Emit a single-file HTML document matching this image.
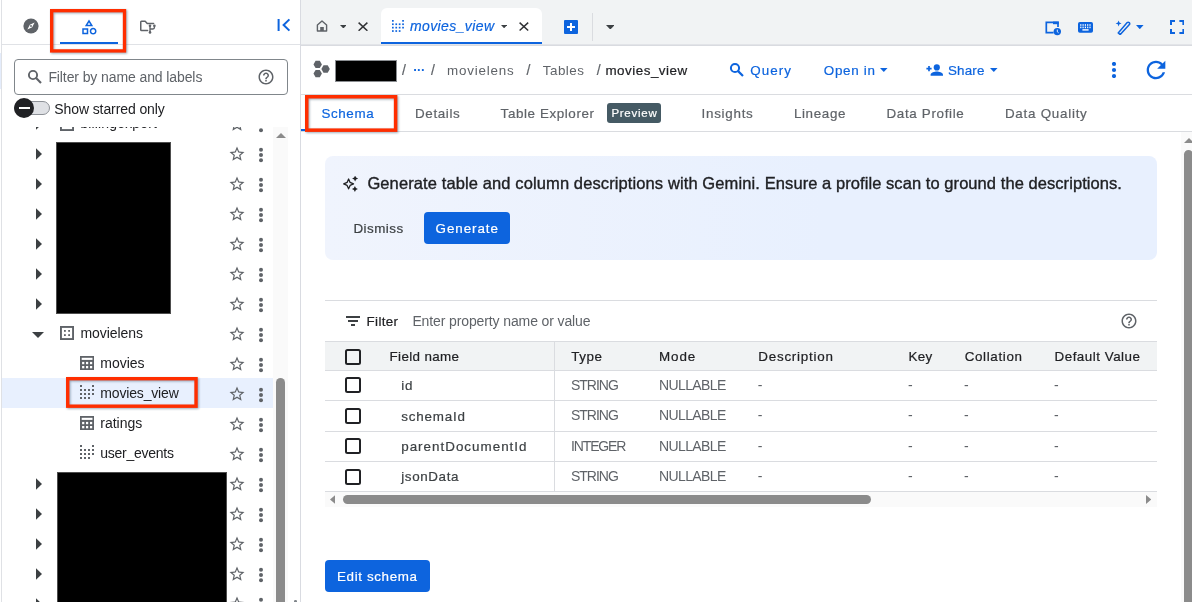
<!DOCTYPE html>
<html lang="en"><head><meta charset="utf-8"><title>BigQuery - movies_view</title>
<style>
html,body{margin:0;padding:0}
body{width:1192px;height:602px;position:relative;overflow:hidden;background:#fff;will-change:transform;font-family:"Liberation Sans",sans-serif;}
body div,body span,body svg{position:absolute;box-sizing:border-box}
span{white-space:pre}
</style></head><body>
<div style="left:0px;top:53px;width:1px;height:36px;background:#e4ecfb;"></div>
<div style="left:1px;top:0px;width:1px;height:602px;background:#dfe1e5;"></div>
<div style="left:2px;top:44px;width:298px;height:1px;background:#e0e2e6;"></div>
<svg style="left:22px;top:17px;" width="18" height="18" viewBox="0 0 18 18"><circle cx="9" cy="9" r="7.6" fill="#5f6368"/><path d="M12.6 5.4 L10.2 10.2 L5.4 12.6 L7.8 7.8 Z" fill="#fff"/><circle cx="9" cy="9" r="0.9" fill="#5f6368"/></svg>
<svg style="left:80px;top:17.6px;" width="18" height="18" viewBox="0 0 24 24"><path fill="#0d64de" d="M12 2l-5.5 9h11L12 2zm0 3.84L13.93 9h-3.87L12 5.84zM17.5 13c-2.49 0-4.5 2.01-4.5 4.5s2.01 4.5 4.5 4.5 4.5-2.01 4.5-4.5-2.01-4.5-4.5-4.5zm0 7c-1.38 0-2.5-1.12-2.5-2.5s1.12-2.5 2.5-2.5 2.5 1.12 2.5 2.5-1.12 2.5-2.5 2.5zM3 21.5h8v-8H3v8zm2-6h4v4H5v-4z"/></svg>
<div style="left:60px;top:42px;width:58px;height:2px;background:#0d64de;"></div>
<svg style="left:138px;top:17px;" width="20" height="18" viewBox="0 0 20 18"><path d="M9.6 13.45 H3.5 Q2.75 13.45 2.75 12.7 V5.1 Q2.75 4.35 3.5 4.35 H7.2 L9.2 6.4 H15.6" fill="none" stroke="#5f6368" stroke-width="1.5" stroke-linecap="round" stroke-linejoin="round"/><path d="M12 8.8 V15.2 M16.4 8.8 V10.6 Q16.4 12 15 12 H12" fill="none" stroke="#5f6368" stroke-width="1.4"/><circle cx="12" cy="8.8" r="1.3" fill="#5f6368"/><circle cx="16.4" cy="8.8" r="1.3" fill="#5f6368"/><circle cx="12" cy="15.4" r="1.3" fill="#5f6368"/></svg>
<svg style="left:276px;top:17px;" width="16" height="16" viewBox="0 0 16 16"><path d="M2.6 2v12" stroke="#0d64de" stroke-width="2" fill="none"/><path d="M13.4 2.4 L7.6 8 L13.4 13.6" stroke="#0d64de" stroke-width="2" fill="none"/></svg>
<svg style="left:45.7px;top:5.25px;filter:drop-shadow(1px 1px 1.2px rgba(40,70,100,.45))" width="84.2" height="51.6" viewBox="0 0 84.2 51.6"><rect x="5.67" y="5.67" width="72.85" height="40.25" fill="none" stroke="#ff2e00" stroke-width="3.35"/></svg>
<svg style="left:36px;top:118px;" width="6" height="12" viewBox="0 0 6 12"><path d="M0 0.3 L6 6 L0 11.7 Z" fill="#3c4043"/></svg>
<svg style="left:60px;top:117.0px;" width="14" height="14" viewBox="0 0 14 14"><rect x="0.95" y="0.95" width="12.1" height="12.1" fill="none" stroke="#5f6368" stroke-width="1.9"/><rect x="4" y="4" width="1.8" height="1.8" fill="#5f6368"/><rect x="4" y="8.2" width="1.8" height="1.8" fill="#5f6368"/><rect x="8.2" y="4" width="1.8" height="1.8" fill="#5f6368"/><rect x="8.2" y="8.2" width="1.8" height="1.8" fill="#5f6368"/></svg>
<span style="left:80.40px;top:113px;line-height:21px;font-size:14px;color:#202124;letter-spacing:0.148px;">billingexport</span>
<svg style="left:228.05px;top:114.6px;" width="18" height="18" viewBox="0 0 24 24"><path fill="#5f6368" d="M22 9.24l-7.19-.62L12 2 9.19 8.63 2 9.24l5.46 4.73L5.82 21 12 17.27 18.18 21l-1.63-7.03L22 9.24zM12 15.4l-3.76 2.27 1-4.28-3.32-2.88 4.38-.38L12 6.1l1.71 4.04 4.38.38-3.32 2.88 1 4.28L12 15.4z"/></svg>
<svg style="left:258px;top:116.8px;" width="6" height="16" viewBox="0 0 6 16"><circle cx="3" cy="2.8499999999999996" r="2.0" fill="#5f6368"/><circle cx="3" cy="8.0" r="2.0" fill="#5f6368"/><circle cx="3" cy="13.15" r="2.0" fill="#5f6368"/></svg>
<div style="left:2px;top:96px;width:271px;height:30.6px;background:#fff;"></div>
<div style="left:14px;top:59px;width:274px;height:36px;border:1px solid #80868b;border-radius:4px;background:#fff"></div>
<svg style="left:27px;top:68.5px;" width="16" height="16" viewBox="0 0 16 16"><circle cx="6" cy="6" r="4.1" fill="none" stroke="#5f6368" stroke-width="1.9"/><path d="M9.1 9.1 L14 14" stroke="#5f6368" stroke-width="2.1" fill="none"/></svg>
<span style="left:48.40px;top:67px;line-height:21px;font-size:14px;color:#5f6368;letter-spacing:-0.101px;">Filter by name and labels</span>
<svg style="left:256.7px;top:68px;" width="18" height="18" viewBox="0 0 24 24"><path fill="#5f6368" d="M11 18h2v-2h-2v2zm1-16C6.48 2 2 6.48 2 12s4.48 10 10 10 10-4.48 10-10S17.52 2 12 2zm0 18c-4.41 0-8-3.59-8-8s3.590-8 8-8 8 3.590 8 8-3.590 8-8 8zm0-14c-2.210 0-4 1.790-4 4h2c0-1.100.9-2 2-2s2 .9 2 2c0 2-3 1.750-3 5h2c0-2.250 3-2.500 3-5 0-2.210-1.790-4-4-4z"/></svg>
<div style="left:14px;top:101px;width:36px;height:14px;border-radius:7px;background:#dfe1e5;border:1px solid #8d9197"></div>
<div style="left:14px;top:98px;width:20px;height:20px;border-radius:10px;background:#202124"></div>
<div style="left:18.5px;top:107px;width:11px;height:2px;background:#fff;"></div>
<span style="left:54.30px;top:99px;line-height:21px;font-size:14px;color:#202124;letter-spacing:-0.098px;">Show starred only</span>
<div style="left:2px;top:378px;width:271px;height:30px;background:#e8f0fe;"></div>
<svg style="left:228.05px;top:144.6px;" width="18" height="18" viewBox="0 0 24 24"><path fill="#5f6368" d="M22 9.24l-7.19-.62L12 2 9.19 8.63 2 9.24l5.46 4.73L5.82 21 12 17.27 18.18 21l-1.63-7.03L22 9.24zM12 15.4l-3.76 2.27 1-4.28-3.32-2.88 4.38-.38L12 6.1l1.71 4.04 4.38.38-3.32 2.88 1 4.28L12 15.4z"/></svg>
<svg style="left:258px;top:146.8px;" width="6" height="16" viewBox="0 0 6 16"><circle cx="3" cy="2.8499999999999996" r="2.0" fill="#5f6368"/><circle cx="3" cy="8.0" r="2.0" fill="#5f6368"/><circle cx="3" cy="13.15" r="2.0" fill="#5f6368"/></svg>
<svg style="left:36px;top:148px;" width="6" height="12" viewBox="0 0 6 12"><path d="M0 0.3 L6 6 L0 11.7 Z" fill="#3c4043"/></svg>
<svg style="left:228.05px;top:174.6px;" width="18" height="18" viewBox="0 0 24 24"><path fill="#5f6368" d="M22 9.24l-7.19-.62L12 2 9.19 8.63 2 9.24l5.46 4.73L5.82 21 12 17.27 18.18 21l-1.63-7.03L22 9.24zM12 15.4l-3.76 2.27 1-4.28-3.32-2.88 4.38-.38L12 6.1l1.71 4.04 4.38.38-3.32 2.88 1 4.28L12 15.4z"/></svg>
<svg style="left:258px;top:176.8px;" width="6" height="16" viewBox="0 0 6 16"><circle cx="3" cy="2.8499999999999996" r="2.0" fill="#5f6368"/><circle cx="3" cy="8.0" r="2.0" fill="#5f6368"/><circle cx="3" cy="13.15" r="2.0" fill="#5f6368"/></svg>
<svg style="left:36px;top:178px;" width="6" height="12" viewBox="0 0 6 12"><path d="M0 0.3 L6 6 L0 11.7 Z" fill="#3c4043"/></svg>
<svg style="left:228.05px;top:204.6px;" width="18" height="18" viewBox="0 0 24 24"><path fill="#5f6368" d="M22 9.24l-7.19-.62L12 2 9.19 8.63 2 9.24l5.46 4.73L5.82 21 12 17.27 18.18 21l-1.63-7.03L22 9.24zM12 15.4l-3.76 2.27 1-4.28-3.32-2.88 4.38-.38L12 6.1l1.71 4.04 4.38.38-3.32 2.88 1 4.28L12 15.4z"/></svg>
<svg style="left:258px;top:206.8px;" width="6" height="16" viewBox="0 0 6 16"><circle cx="3" cy="2.8499999999999996" r="2.0" fill="#5f6368"/><circle cx="3" cy="8.0" r="2.0" fill="#5f6368"/><circle cx="3" cy="13.15" r="2.0" fill="#5f6368"/></svg>
<svg style="left:36px;top:208px;" width="6" height="12" viewBox="0 0 6 12"><path d="M0 0.3 L6 6 L0 11.7 Z" fill="#3c4043"/></svg>
<svg style="left:228.05px;top:234.6px;" width="18" height="18" viewBox="0 0 24 24"><path fill="#5f6368" d="M22 9.24l-7.19-.62L12 2 9.19 8.63 2 9.24l5.46 4.73L5.82 21 12 17.27 18.18 21l-1.63-7.03L22 9.24zM12 15.4l-3.76 2.27 1-4.28-3.32-2.88 4.38-.38L12 6.1l1.71 4.04 4.38.38-3.32 2.88 1 4.28L12 15.4z"/></svg>
<svg style="left:258px;top:236.8px;" width="6" height="16" viewBox="0 0 6 16"><circle cx="3" cy="2.8499999999999996" r="2.0" fill="#5f6368"/><circle cx="3" cy="8.0" r="2.0" fill="#5f6368"/><circle cx="3" cy="13.15" r="2.0" fill="#5f6368"/></svg>
<svg style="left:36px;top:238px;" width="6" height="12" viewBox="0 0 6 12"><path d="M0 0.3 L6 6 L0 11.7 Z" fill="#3c4043"/></svg>
<svg style="left:228.05px;top:264.6px;" width="18" height="18" viewBox="0 0 24 24"><path fill="#5f6368" d="M22 9.24l-7.19-.62L12 2 9.19 8.63 2 9.24l5.46 4.73L5.82 21 12 17.27 18.18 21l-1.63-7.03L22 9.24zM12 15.4l-3.76 2.27 1-4.28-3.32-2.88 4.38-.38L12 6.1l1.71 4.04 4.38.38-3.32 2.88 1 4.28L12 15.4z"/></svg>
<svg style="left:258px;top:266.8px;" width="6" height="16" viewBox="0 0 6 16"><circle cx="3" cy="2.8499999999999996" r="2.0" fill="#5f6368"/><circle cx="3" cy="8.0" r="2.0" fill="#5f6368"/><circle cx="3" cy="13.15" r="2.0" fill="#5f6368"/></svg>
<svg style="left:36px;top:268px;" width="6" height="12" viewBox="0 0 6 12"><path d="M0 0.3 L6 6 L0 11.7 Z" fill="#3c4043"/></svg>
<svg style="left:228.05px;top:294.6px;" width="18" height="18" viewBox="0 0 24 24"><path fill="#5f6368" d="M22 9.24l-7.19-.62L12 2 9.19 8.63 2 9.24l5.46 4.73L5.82 21 12 17.27 18.18 21l-1.63-7.03L22 9.24zM12 15.4l-3.76 2.27 1-4.28-3.32-2.88 4.38-.38L12 6.1l1.71 4.04 4.38.38-3.32 2.88 1 4.28L12 15.4z"/></svg>
<svg style="left:258px;top:296.8px;" width="6" height="16" viewBox="0 0 6 16"><circle cx="3" cy="2.8499999999999996" r="2.0" fill="#5f6368"/><circle cx="3" cy="8.0" r="2.0" fill="#5f6368"/><circle cx="3" cy="13.15" r="2.0" fill="#5f6368"/></svg>
<svg style="left:36px;top:298px;" width="6" height="12" viewBox="0 0 6 12"><path d="M0 0.3 L6 6 L0 11.7 Z" fill="#3c4043"/></svg>
<svg style="left:228.05px;top:324.6px;" width="18" height="18" viewBox="0 0 24 24"><path fill="#5f6368" d="M22 9.24l-7.19-.62L12 2 9.19 8.63 2 9.24l5.46 4.73L5.82 21 12 17.27 18.18 21l-1.63-7.03L22 9.24zM12 15.4l-3.76 2.27 1-4.28-3.32-2.88 4.38-.38L12 6.1l1.71 4.04 4.38.38-3.32 2.88 1 4.28L12 15.4z"/></svg>
<svg style="left:258px;top:326.8px;" width="6" height="16" viewBox="0 0 6 16"><circle cx="3" cy="2.8499999999999996" r="2.0" fill="#5f6368"/><circle cx="3" cy="8.0" r="2.0" fill="#5f6368"/><circle cx="3" cy="13.15" r="2.0" fill="#5f6368"/></svg>
<svg style="left:228.05px;top:354.6px;" width="18" height="18" viewBox="0 0 24 24"><path fill="#5f6368" d="M22 9.24l-7.19-.62L12 2 9.19 8.63 2 9.24l5.46 4.73L5.82 21 12 17.27 18.18 21l-1.63-7.03L22 9.24zM12 15.4l-3.76 2.27 1-4.28-3.32-2.88 4.38-.38L12 6.1l1.71 4.04 4.38.38-3.32 2.88 1 4.28L12 15.4z"/></svg>
<svg style="left:258px;top:356.8px;" width="6" height="16" viewBox="0 0 6 16"><circle cx="3" cy="2.8499999999999996" r="2.0" fill="#5f6368"/><circle cx="3" cy="8.0" r="2.0" fill="#5f6368"/><circle cx="3" cy="13.15" r="2.0" fill="#5f6368"/></svg>
<svg style="left:228.05px;top:384.6px;" width="18" height="18" viewBox="0 0 24 24"><path fill="#5f6368" d="M22 9.24l-7.19-.62L12 2 9.19 8.63 2 9.24l5.46 4.73L5.82 21 12 17.27 18.18 21l-1.63-7.03L22 9.24zM12 15.4l-3.76 2.27 1-4.28-3.32-2.88 4.38-.38L12 6.1l1.71 4.04 4.38.38-3.32 2.88 1 4.28L12 15.4z"/></svg>
<svg style="left:258px;top:386.8px;" width="6" height="16" viewBox="0 0 6 16"><circle cx="3" cy="2.8499999999999996" r="2.0" fill="#5f6368"/><circle cx="3" cy="8.0" r="2.0" fill="#5f6368"/><circle cx="3" cy="13.15" r="2.0" fill="#5f6368"/></svg>
<svg style="left:228.05px;top:414.6px;" width="18" height="18" viewBox="0 0 24 24"><path fill="#5f6368" d="M22 9.24l-7.19-.62L12 2 9.19 8.63 2 9.24l5.46 4.73L5.82 21 12 17.27 18.18 21l-1.63-7.03L22 9.24zM12 15.4l-3.76 2.27 1-4.28-3.32-2.88 4.38-.38L12 6.1l1.71 4.04 4.38.38-3.32 2.88 1 4.28L12 15.4z"/></svg>
<svg style="left:258px;top:416.8px;" width="6" height="16" viewBox="0 0 6 16"><circle cx="3" cy="2.8499999999999996" r="2.0" fill="#5f6368"/><circle cx="3" cy="8.0" r="2.0" fill="#5f6368"/><circle cx="3" cy="13.15" r="2.0" fill="#5f6368"/></svg>
<svg style="left:228.05px;top:444.6px;" width="18" height="18" viewBox="0 0 24 24"><path fill="#5f6368" d="M22 9.24l-7.19-.62L12 2 9.19 8.63 2 9.24l5.46 4.73L5.82 21 12 17.27 18.18 21l-1.63-7.03L22 9.24zM12 15.4l-3.76 2.27 1-4.28-3.32-2.88 4.38-.38L12 6.1l1.71 4.04 4.38.38-3.32 2.88 1 4.28L12 15.4z"/></svg>
<svg style="left:258px;top:446.8px;" width="6" height="16" viewBox="0 0 6 16"><circle cx="3" cy="2.8499999999999996" r="2.0" fill="#5f6368"/><circle cx="3" cy="8.0" r="2.0" fill="#5f6368"/><circle cx="3" cy="13.15" r="2.0" fill="#5f6368"/></svg>
<svg style="left:228.05px;top:474.6px;" width="18" height="18" viewBox="0 0 24 24"><path fill="#5f6368" d="M22 9.24l-7.19-.62L12 2 9.19 8.63 2 9.24l5.46 4.73L5.82 21 12 17.27 18.18 21l-1.63-7.03L22 9.24zM12 15.4l-3.76 2.27 1-4.28-3.32-2.88 4.38-.38L12 6.1l1.71 4.04 4.38.38-3.32 2.88 1 4.28L12 15.4z"/></svg>
<svg style="left:258px;top:476.8px;" width="6" height="16" viewBox="0 0 6 16"><circle cx="3" cy="2.8499999999999996" r="2.0" fill="#5f6368"/><circle cx="3" cy="8.0" r="2.0" fill="#5f6368"/><circle cx="3" cy="13.15" r="2.0" fill="#5f6368"/></svg>
<svg style="left:36px;top:478px;" width="6" height="12" viewBox="0 0 6 12"><path d="M0 0.3 L6 6 L0 11.7 Z" fill="#3c4043"/></svg>
<svg style="left:228.05px;top:504.6px;" width="18" height="18" viewBox="0 0 24 24"><path fill="#5f6368" d="M22 9.24l-7.19-.62L12 2 9.19 8.63 2 9.24l5.46 4.73L5.82 21 12 17.27 18.18 21l-1.63-7.03L22 9.24zM12 15.4l-3.76 2.27 1-4.28-3.32-2.88 4.38-.38L12 6.1l1.71 4.04 4.38.38-3.32 2.88 1 4.28L12 15.4z"/></svg>
<svg style="left:258px;top:506.8px;" width="6" height="16" viewBox="0 0 6 16"><circle cx="3" cy="2.8499999999999996" r="2.0" fill="#5f6368"/><circle cx="3" cy="8.0" r="2.0" fill="#5f6368"/><circle cx="3" cy="13.15" r="2.0" fill="#5f6368"/></svg>
<svg style="left:36px;top:508px;" width="6" height="12" viewBox="0 0 6 12"><path d="M0 0.3 L6 6 L0 11.7 Z" fill="#3c4043"/></svg>
<svg style="left:228.05px;top:534.6px;" width="18" height="18" viewBox="0 0 24 24"><path fill="#5f6368" d="M22 9.24l-7.19-.62L12 2 9.19 8.63 2 9.24l5.46 4.73L5.82 21 12 17.27 18.18 21l-1.63-7.03L22 9.24zM12 15.4l-3.76 2.27 1-4.28-3.32-2.88 4.38-.38L12 6.1l1.71 4.04 4.38.38-3.32 2.88 1 4.28L12 15.4z"/></svg>
<svg style="left:258px;top:536.8px;" width="6" height="16" viewBox="0 0 6 16"><circle cx="3" cy="2.8499999999999996" r="2.0" fill="#5f6368"/><circle cx="3" cy="8.0" r="2.0" fill="#5f6368"/><circle cx="3" cy="13.15" r="2.0" fill="#5f6368"/></svg>
<svg style="left:36px;top:538px;" width="6" height="12" viewBox="0 0 6 12"><path d="M0 0.3 L6 6 L0 11.7 Z" fill="#3c4043"/></svg>
<svg style="left:228.05px;top:564.6px;" width="18" height="18" viewBox="0 0 24 24"><path fill="#5f6368" d="M22 9.24l-7.19-.62L12 2 9.19 8.63 2 9.24l5.46 4.73L5.82 21 12 17.27 18.18 21l-1.63-7.03L22 9.24zM12 15.4l-3.76 2.27 1-4.28-3.32-2.88 4.38-.38L12 6.1l1.71 4.04 4.38.38-3.32 2.88 1 4.28L12 15.4z"/></svg>
<svg style="left:258px;top:566.8px;" width="6" height="16" viewBox="0 0 6 16"><circle cx="3" cy="2.8499999999999996" r="2.0" fill="#5f6368"/><circle cx="3" cy="8.0" r="2.0" fill="#5f6368"/><circle cx="3" cy="13.15" r="2.0" fill="#5f6368"/></svg>
<svg style="left:36px;top:568px;" width="6" height="12" viewBox="0 0 6 12"><path d="M0 0.3 L6 6 L0 11.7 Z" fill="#3c4043"/></svg>
<svg style="left:228.05px;top:594.6px;" width="18" height="18" viewBox="0 0 24 24"><path fill="#5f6368" d="M22 9.24l-7.19-.62L12 2 9.19 8.63 2 9.24l5.46 4.73L5.82 21 12 17.27 18.18 21l-1.63-7.03L22 9.24zM12 15.4l-3.76 2.27 1-4.28-3.32-2.88 4.38-.38L12 6.1l1.71 4.04 4.38.38-3.32 2.88 1 4.28L12 15.4z"/></svg>
<svg style="left:258px;top:596.8px;" width="6" height="16" viewBox="0 0 6 16"><circle cx="3" cy="2.8499999999999996" r="2.0" fill="#5f6368"/><circle cx="3" cy="8.0" r="2.0" fill="#5f6368"/><circle cx="3" cy="13.15" r="2.0" fill="#5f6368"/></svg>
<svg style="left:36px;top:598px;" width="6" height="12" viewBox="0 0 6 12"><path d="M0 0.3 L6 6 L0 11.7 Z" fill="#3c4043"/></svg>
<svg style="left:32.0px;top:332.0px;" width="12" height="6" viewBox="0 0 12 6"><path d="M0 0 H12 L6.0 6 Z" fill="#3c4043"/></svg>
<svg style="left:60px;top:325.8px;" width="14" height="14" viewBox="0 0 14 14"><rect x="0.95" y="0.95" width="12.1" height="12.1" fill="none" stroke="#5f6368" stroke-width="1.9"/><rect x="4" y="4" width="1.8" height="1.8" fill="#5f6368"/><rect x="4" y="8.2" width="1.8" height="1.8" fill="#5f6368"/><rect x="8.2" y="4" width="1.8" height="1.8" fill="#5f6368"/><rect x="8.2" y="8.2" width="1.8" height="1.8" fill="#5f6368"/></svg>
<span style="left:80.40px;top:323px;line-height:21px;font-size:14px;color:#202124;letter-spacing:-0.054px;">movielens</span>
<svg style="left:80px;top:356px;" width="14.2" height="14" viewBox="0 0 14.2 14"><rect width="14.2" height="14" fill="#5f6368"/><rect x="1.7" y="1.8" width="10.8" height="2.1" fill="#fff"/><rect x="2.1" y="5.9" width="2.2" height="2.3" fill="#fff"/><rect x="2.1" y="10.0" width="2.2" height="2.3" fill="#fff"/><rect x="6.0" y="5.9" width="2.2" height="2.3" fill="#fff"/><rect x="6.0" y="10.0" width="2.2" height="2.3" fill="#fff"/><rect x="10.0" y="5.9" width="2.2" height="2.3" fill="#fff"/><rect x="10.0" y="10.0" width="2.2" height="2.3" fill="#fff"/></svg>
<span style="left:100.30px;top:353px;line-height:21px;font-size:14px;color:#202124;letter-spacing:-0.012px;">movies</span>
<svg style="left:80px;top:385.0px;" width="14.0" height="14.0" viewBox="0 0 14 14"><rect x="0.0" y="0.0" width="2" height="2" fill="#5f6368"/><rect x="0.0" y="4.0" width="2" height="2" fill="#5f6368"/><rect x="0.0" y="8.0" width="2" height="2" fill="#5f6368"/><rect x="0.0" y="12.0" width="2" height="2" fill="#5f6368"/><rect x="4.0" y="4.0" width="2" height="2" fill="#5f6368"/><rect x="4.0" y="8.0" width="2" height="2" fill="#5f6368"/><rect x="4.0" y="12.0" width="2" height="2" fill="#5f6368"/><rect x="8.0" y="4.0" width="2" height="2" fill="#5f6368"/><rect x="8.0" y="8.0" width="2" height="2" fill="#5f6368"/><rect x="8.0" y="12.0" width="2" height="2" fill="#5f6368"/><rect x="12.0" y="0.0" width="2" height="2" fill="#5f6368"/><rect x="12.0" y="4.0" width="2" height="2" fill="#5f6368"/><rect x="12.0" y="8.0" width="2" height="2" fill="#5f6368"/></svg>
<span style="left:100.30px;top:383px;line-height:21px;font-size:14px;color:#202124;letter-spacing:-0.164px;">movies_view</span>
<svg style="left:80px;top:416px;" width="14.2" height="14" viewBox="0 0 14.2 14"><rect width="14.2" height="14" fill="#5f6368"/><rect x="1.7" y="1.8" width="10.8" height="2.1" fill="#fff"/><rect x="2.1" y="5.9" width="2.2" height="2.3" fill="#fff"/><rect x="2.1" y="10.0" width="2.2" height="2.3" fill="#fff"/><rect x="6.0" y="5.9" width="2.2" height="2.3" fill="#fff"/><rect x="6.0" y="10.0" width="2.2" height="2.3" fill="#fff"/><rect x="10.0" y="5.9" width="2.2" height="2.3" fill="#fff"/><rect x="10.0" y="10.0" width="2.2" height="2.3" fill="#fff"/></svg>
<span style="left:100.30px;top:413px;line-height:21px;font-size:14px;color:#202124;letter-spacing:-0.005px;">ratings</span>
<svg style="left:80px;top:445.0px;" width="14.0" height="14.0" viewBox="0 0 14 14"><rect x="0.0" y="0.0" width="2" height="2" fill="#5f6368"/><rect x="0.0" y="4.0" width="2" height="2" fill="#5f6368"/><rect x="0.0" y="8.0" width="2" height="2" fill="#5f6368"/><rect x="0.0" y="12.0" width="2" height="2" fill="#5f6368"/><rect x="4.0" y="4.0" width="2" height="2" fill="#5f6368"/><rect x="4.0" y="8.0" width="2" height="2" fill="#5f6368"/><rect x="4.0" y="12.0" width="2" height="2" fill="#5f6368"/><rect x="8.0" y="4.0" width="2" height="2" fill="#5f6368"/><rect x="8.0" y="8.0" width="2" height="2" fill="#5f6368"/><rect x="8.0" y="12.0" width="2" height="2" fill="#5f6368"/><rect x="12.0" y="0.0" width="2" height="2" fill="#5f6368"/><rect x="12.0" y="4.0" width="2" height="2" fill="#5f6368"/><rect x="12.0" y="8.0" width="2" height="2" fill="#5f6368"/></svg>
<span style="left:100.30px;top:443px;line-height:21px;font-size:14px;color:#202124;letter-spacing:-0.258px;">user_events</span>
<div style="left:56px;top:142px;width:115px;height:172px;background:#000;border:1px solid #4d4d4d"></div>
<div style="left:57px;top:472px;width:170px;height:140px;background:#000;border:1px solid #4d4d4d"></div>
<svg style="left:62.05px;top:373.2px;filter:drop-shadow(1px 1px 1.2px rgba(40,70,100,.45))" width="139.75" height="38.900000000000034" viewBox="0 0 139.75 38.900000000000034"><rect x="5.70" y="5.70" width="128.35" height="27.50" fill="none" stroke="#ff2e00" stroke-width="3.4"/></svg>
<div style="left:273px;top:126.6px;width:15px;height:476px;background:#fafafa;"></div>
<svg style="left:275.5px;top:133px;" width="10" height="5" viewBox="0 0 10 5"><path d="M0 5 L5 0 L10 5 Z" fill="#8b8b8b"/></svg>
<div style="left:276px;top:378px;width:9px;height:240px;background:#8b8b8b;border-radius:4.5px"></div>
<div style="left:300px;top:0px;width:1px;height:602px;background:#d9dbe1;"></div>
<div style="left:294.4px;top:600.2px;width:2.4px;height:2.4px;background:#80868b;border-radius:1.2px"></div>
<div style="left:301px;top:0px;width:891px;height:44px;background:#f1f3f4;"></div>
<div style="left:301px;top:44px;width:891px;height:1px;background:#e2e4e8;"></div>
<div style="left:301px;top:45px;width:891px;height:1px;background:#d9dbe0;"></div>
<div style="left:381px;top:8px;width:161px;height:36px;background:#fff;border-radius:6px 6px 0 0"></div>
<div style="left:381px;top:42px;width:161px;height:2px;background:#0d64de;"></div>
<svg style="left:316px;top:20px;" width="12" height="12" viewBox="0 0 12 12"><path d="M1.4 5 L6 1 L10.6 5 V11 H1.4 Z" fill="none" stroke="#5f6368" stroke-width="1.4" stroke-linejoin="round"/><rect x="4.2" y="7" width="3.6" height="4" fill="#5f6368"/></svg>
<svg style="left:339.6px;top:24.85px;" width="6.8" height="3.5" viewBox="0 0 6.8 3.5"><path d="M0 0 H6.8 L3.4 3.5 Z" fill="#3c4043"/></svg>
<svg style="left:358px;top:22px;" width="10" height="9.399999999999999" viewBox="0 0 10 9.399999999999999"><path d="M0.6 0.6 L9.4 8.799999999999999 M9.4 0.6 L0.6 8.799999999999999" stroke="#303134" stroke-width="1.45" fill="none"/></svg>
<svg style="left:392px;top:19.85px;" width="11.9" height="11.9" viewBox="0 0 14 14"><rect x="0.0" y="0.0" width="2" height="2" fill="#0d64de"/><rect x="0.0" y="4.0" width="2" height="2" fill="#0d64de"/><rect x="0.0" y="8.0" width="2" height="2" fill="#0d64de"/><rect x="0.0" y="12.0" width="2" height="2" fill="#0d64de"/><rect x="4.0" y="4.0" width="2" height="2" fill="#0d64de"/><rect x="4.0" y="8.0" width="2" height="2" fill="#0d64de"/><rect x="4.0" y="12.0" width="2" height="2" fill="#0d64de"/><rect x="8.0" y="4.0" width="2" height="2" fill="#0d64de"/><rect x="8.0" y="8.0" width="2" height="2" fill="#0d64de"/><rect x="8.0" y="12.0" width="2" height="2" fill="#0d64de"/><rect x="12.0" y="0.0" width="2" height="2" fill="#0d64de"/><rect x="12.0" y="4.0" width="2" height="2" fill="#0d64de"/><rect x="12.0" y="8.0" width="2" height="2" fill="#0d64de"/></svg>
<span style="left:410.00px;top:16px;line-height:21px;font-size:14px;color:#0d64de;font-style:italic;-webkit-text-stroke:0.2px #0d64de;letter-spacing:0.386px;">movies_view</span>
<svg style="left:501.09999999999997px;top:24.950000000000003px;" width="6.2" height="3.3" viewBox="0 0 6.2 3.3"><path d="M0 0 H6.2 L3.1 3.3 Z" fill="#3c4043"/></svg>
<svg style="left:519.2px;top:22.4px;" width="9.799999999999955" height="9.200000000000003" viewBox="0 0 9.799999999999955 9.200000000000003"><path d="M0.6 0.6 L9.199999999999955 8.600000000000003 M9.199999999999955 0.6 L0.6 8.600000000000003" stroke="#303134" stroke-width="1.45" fill="none"/></svg>
<div style="left:564px;top:20px;width:14px;height:14px;background:#0d64de;border-radius:1px"></div>
<div style="left:567px;top:26px;width:8px;height:2px;background:#fff;"></div>
<div style="left:570px;top:23px;width:2px;height:8px;background:#fff;"></div>
<div style="left:592px;top:13px;width:1px;height:28px;background:#dadce0;"></div>
<svg style="left:605.7px;top:24.8px;" width="8.6" height="4.6" viewBox="0 0 8.6 4.6"><path d="M0 0 H8.6 L4.3 4.6 Z" fill="#3c4043"/></svg>
<svg style="left:1045px;top:20.5px;" width="17" height="15" viewBox="0 0 17 15"><path d="M8.6 11.6 H1.3 V1.4 H13 V6" fill="none" stroke="#0d64de" stroke-width="1.7"/><rect x="8" y="0.6" width="5.8" height="2.6" fill="#0d64de"/><circle cx="12.3" cy="10.6" r="3.7" fill="#0d64de"/><path d="M12.3 8.6 V10.8 L13.6 11.8" stroke="#fff" stroke-width="0.9" fill="none"/></svg>
<svg style="left:1077.5px;top:21.6px;" width="15" height="11" viewBox="0 0 15 11"><rect width="15" height="10.8" rx="1.8" fill="#0d64de"/><rect x="2.2" y="2.2" width="1.2" height="1.6" fill="#fff"/><rect x="2.2" y="4.6" width="1.2" height="1.6" fill="#fff"/><rect x="4.5" y="2.2" width="1.2" height="1.6" fill="#fff"/><rect x="4.5" y="4.6" width="1.2" height="1.6" fill="#fff"/><rect x="6.8" y="2.2" width="1.2" height="1.6" fill="#fff"/><rect x="6.8" y="4.6" width="1.2" height="1.6" fill="#fff"/><rect x="9.1" y="2.2" width="1.2" height="1.6" fill="#fff"/><rect x="9.1" y="4.6" width="1.2" height="1.6" fill="#fff"/><rect x="11.399999999999999" y="2.2" width="1.2" height="1.6" fill="#fff"/><rect x="11.399999999999999" y="4.6" width="1.2" height="1.6" fill="#fff"/><rect x="4.4" y="7.2" width="6.2" height="1.4" fill="#fff"/></svg>
<svg style="left:1114.5px;top:19.5px;" width="16" height="15" viewBox="0 0 16 15"><path d="M3.2 13 L12.2 2.6 A1.5 1.5 0 0 1 14.4 4.6 L5.2 14.6 Z" fill="none" stroke="#0d64de" stroke-width="1.5" stroke-linejoin="round"/><path d="M3.6 0.4 L4.4 2.6 L6.6 3.4 L4.4 4.2 L3.6 6.4 L2.8 4.2 L0.6 3.4 L2.8 2.6 Z" fill="#0d64de"/></svg>
<svg style="left:1136.4px;top:24.9px;" width="7.6" height="4.2" viewBox="0 0 7.6 4.2"><path d="M0 0 H7.6 L3.8 4.2 Z" fill="#0d64de"/></svg>
<svg style="left:1170px;top:20px;" width="14.4" height="14" viewBox="0 0 14.4 14"><path d="M1 5 V1 H5 M9.4 1 H13.4 V5 M13.4 9 V13 H9.4 M5 13 H1 V9" fill="none" stroke="#0d64de" stroke-width="2"/></svg>
<div style="left:301px;top:94px;width:891px;height:1px;background:#dadce0;"></div>
<svg style="left:312px;top:58px;" width="20" height="22" viewBox="0 0 20 22"><polygon points="9.90,6.40 7.80,10.04 3.60,10.04 1.50,6.40 3.60,2.76 7.80,2.76" fill="#5f6368"/><polygon points="17.80,11.00 15.70,14.64 11.50,14.64 9.40,11.00 11.50,7.36 15.70,7.36" fill="#5f6368"/><polygon points="9.90,15.60 7.80,19.24 3.60,19.24 1.50,15.60 3.60,11.96 7.80,11.96" fill="#5f6368"/></svg>
<div style="left:335px;top:60px;width:62px;height:21.5px;background:#000;border:1px solid #8a8d91"></div>
<span style="left:402.00px;top:60px;line-height:21px;font-size:14px;color:#5f6368;-webkit-text-stroke:0.2px #5f6368;">/</span>
<span style="left:413.20px;top:60px;line-height:20px;font-size:13px;color:#0d64de;font-weight:700;letter-spacing:-0.400px;">···</span>
<span style="left:431.00px;top:60px;line-height:21px;font-size:14px;color:#5f6368;-webkit-text-stroke:0.2px #5f6368;">/</span>
<span style="left:447.10px;top:61px;line-height:20px;font-size:13.4px;color:#5f6368;letter-spacing:0.775px;">movielens</span>
<span style="left:526.40px;top:60px;line-height:21px;font-size:14px;color:#5f6368;-webkit-text-stroke:0.2px #5f6368;">/</span>
<span style="left:542.80px;top:61px;line-height:20px;font-size:13.4px;color:#5f6368;letter-spacing:0.496px;">Tables</span>
<span style="left:596.80px;top:60px;line-height:21px;font-size:14px;color:#5f6368;-webkit-text-stroke:0.2px #5f6368;">/</span>
<span style="left:605.40px;top:61px;line-height:20px;font-size:13.4px;color:#202124;-webkit-text-stroke:0.2px #202124;letter-spacing:0.514px;">movies_view</span>
<svg style="left:729px;top:62px;" width="16" height="16" viewBox="0 0 16 16"><circle cx="6" cy="6" r="4.1" fill="none" stroke="#0d64de" stroke-width="2"/><path d="M9.1 9.1 L14 14" stroke="#0d64de" stroke-width="2.2" fill="none"/></svg>
<span style="left:750.30px;top:61px;line-height:20px;font-size:13.4px;color:#0d64de;-webkit-text-stroke:0.2px #0d64de;letter-spacing:1.058px;">Query</span>
<span style="left:823.80px;top:61px;line-height:20px;font-size:13.4px;color:#0d64de;-webkit-text-stroke:0.2px #0d64de;letter-spacing:0.699px;">Open in</span>
<svg style="left:880.4000000000001px;top:68.25px;" width="7.6" height="3.9" viewBox="0 0 7.6 3.9"><path d="M0 0 H7.6 L3.8 3.9 Z" fill="#0d64de"/></svg>
<svg style="left:925.5px;top:63px;" width="18" height="14" viewBox="0 0 18 14"><circle cx="10.8" cy="4.4" r="3.1" fill="#0d64de"/><path d="M4.6 12.8 V11.6 C4.6 9.4 8.800 8.4 10.8 8.4 C12.8 8.4 17 9.4 17 11.6 V12.8 Z" fill="#0d64de"/><path d="M0.4 5.6 H5.6 M3 3 V8.2" stroke="#0d64de" stroke-width="1.7" fill="none"/></svg>
<span style="left:947.90px;top:61px;line-height:20px;font-size:13.4px;color:#0d64de;-webkit-text-stroke:0.2px #0d64de;letter-spacing:0.191px;">Share</span>
<svg style="left:990.0px;top:68.25px;" width="7.6" height="3.9" viewBox="0 0 7.6 3.9"><path d="M0 0 H7.6 L3.8 3.9 Z" fill="#0d64de"/></svg>
<svg style="left:1111px;top:62.0px;" width="6" height="16" viewBox="0 0 6 16"><circle cx="3" cy="2" r="2.1" fill="#0d64de"/><circle cx="3" cy="8" r="2.1" fill="#0d64de"/><circle cx="3" cy="14" r="2.1" fill="#0d64de"/></svg>
<svg style="left:1142px;top:56px;" width="28" height="28" viewBox="0 0 24 24"><path fill="#0d64de" d="M17.65 6.35C16.2 4.9 14.21 4 12 4c-4.42 0-7.99 3.58-7.990 8s3.570 8 7.990 8c3.730 0 6.840-2.550 7.730-6h-2.080c-.82 2.330-3.040 4-5.650 4-3.310 0-6-2.690-6-6s2.690-6 6-6c1.660 0 3.140.69 4.220 1.780L13 11h7V4l-2.350 2.350z"/></svg>
<div style="left:301px;top:131px;width:891px;height:1px;background:#dadce0;"></div>
<div style="left:301px;top:129px;width:94px;height:2px;background:#0d64de;"></div>
<span style="left:321.40px;top:104px;line-height:20px;font-size:13.4px;color:#0d64de;-webkit-text-stroke:0.2px #0d64de;letter-spacing:0.635px;">Schema</span>
<span style="left:415.00px;top:104px;line-height:20px;font-size:13.4px;color:#5f6368;-webkit-text-stroke:0.2px #5f6368;letter-spacing:0.644px;">Details</span>
<span style="left:500.60px;top:104px;line-height:20px;font-size:13.4px;color:#5f6368;-webkit-text-stroke:0.2px #5f6368;letter-spacing:0.600px;">Table Explorer</span>
<div style="left:607px;top:103px;width:54px;height:20px;background:#455a64;border-radius:3px"></div>
<span style="left:611.40px;top:105px;line-height:17px;font-size:11.5px;color:#fff;-webkit-text-stroke:0.2px #fff;letter-spacing:0.732px;">Preview</span>
<span style="left:701.50px;top:104px;line-height:20px;font-size:13.4px;color:#5f6368;-webkit-text-stroke:0.2px #5f6368;letter-spacing:0.735px;">Insights</span>
<span style="left:793.90px;top:104px;line-height:20px;font-size:13.4px;color:#5f6368;-webkit-text-stroke:0.2px #5f6368;letter-spacing:0.655px;">Lineage</span>
<span style="left:886.50px;top:104px;line-height:20px;font-size:13.4px;color:#5f6368;-webkit-text-stroke:0.2px #5f6368;letter-spacing:0.666px;">Data Profile</span>
<span style="left:1004.90px;top:104px;line-height:20px;font-size:13.4px;color:#5f6368;-webkit-text-stroke:0.2px #5f6368;letter-spacing:0.747px;">Data Quality</span>
<svg style="left:301.04px;top:91.04px;filter:drop-shadow(1px 1px 1.2px rgba(40,70,100,.45))" width="100.35999999999996" height="44.90999999999998" viewBox="0 0 100.35999999999996 44.90999999999998"><rect x="5.75" y="5.75" width="88.86" height="33.41" fill="none" stroke="#ff2e00" stroke-width="3.5"/></svg>
<div style="left:1181px;top:132px;width:11px;height:470px;background:#fafafa;"></div>
<svg style="left:1183.5px;top:138px;" width="10" height="5" viewBox="0 0 10 5"><path d="M0 5 L5 0 L10 5 Z" fill="#8b8b8b"/></svg>
<div style="left:1184px;top:150px;width:9px;height:470px;background:#8b8b8b;border-radius:4.5px"></div>
<div style="left:325px;top:156px;width:832px;height:104px;border-radius:8px;background:linear-gradient(90deg,#f0f4fd 0%,#e8f0fe 60%)"></div>
<svg style="left:343px;top:176px;" width="16" height="17" viewBox="0 0 16 17"><path d="M5.6 3.0 L7.1 6.4 L10.5 7.9 L7.1 9.4 L5.6 12.8 L4.1 9.4 L0.6999999999999993 7.9 L4.1 6.4 Z" fill="none" stroke="#202124" stroke-width="1.3" stroke-linejoin="round"/><path d="M12.1 -0.3999999999999999 L13.1 1.6 L15.1 2.6 L13.1 3.6 L12.1 5.6 L11.1 3.6 L9.1 2.6 L11.1 1.6 Z" fill="#202124"/><path d="M11.9 10.1 L12.9 12.1 L14.9 13.1 L12.9 14.1 L11.9 16.1 L10.9 14.1 L8.9 13.1 L10.9 12.1 Z" fill="#202124"/></svg>
<span style="left:367.40px;top:171px;line-height:25px;font-size:16.5px;color:#202124;-webkit-text-stroke:0.35px #202124;letter-spacing:0.109px;">Generate table and column descriptions with Gemini. </span>
<span style="left:764.80px;top:171px;line-height:25px;font-size:16.5px;color:#202124;-webkit-text-stroke:0.35px #202124;letter-spacing:0.064px;">Ensure a profile scan to ground the descriptions.</span>
<span style="left:353.40px;top:219px;line-height:20px;font-size:13.4px;color:#3c4043;-webkit-text-stroke:0.2px #3c4043;letter-spacing:0.471px;">Dismiss</span>
<div style="left:424px;top:212px;width:86px;height:32px;background:#0d64de;border-radius:4px"></div>
<span style="left:435.60px;top:219px;line-height:20px;font-size:13.4px;color:#fff;-webkit-text-stroke:0.2px #fff;letter-spacing:0.922px;">Generate</span>
<div style="left:325px;top:300px;width:832px;height:1px;background:#dadce0;"></div>
<div style="left:345.7px;top:316.4px;width:14.6px;height:1.7px;background:#3c4043;"></div>
<div style="left:348.2px;top:320.4px;width:9.6px;height:1.7px;background:#3c4043;"></div>
<div style="left:350.8px;top:324.4px;width:4.4px;height:1.7px;background:#3c4043;"></div>
<span style="left:366.60px;top:312px;line-height:20px;font-size:13.4px;color:#202124;-webkit-text-stroke:0.2px #202124;letter-spacing:0.327px;">Filter</span>
<span style="left:412.40px;top:311px;line-height:21px;font-size:14px;color:#5f6368;letter-spacing:-0.116px;">Enter property name or value</span>
<svg style="left:1120px;top:311.6px;" width="18" height="18" viewBox="0 0 24 24"><path fill="#5f6368" d="M11 18h2v-2h-2v2zm1-16C6.48 2 2 6.48 2 12s4.48 10 10 10 10-4.48 10-10S17.52 2 12 2zm0 18c-4.41 0-8-3.59-8-8s3.590-8 8-8 8 3.590 8 8-3.590 8-8 8zm0-14c-2.210 0-4 1.790-4 4h2c0-1.100.9-2 2-2s2 .9 2 2c0 2-3 1.750-3 5h2c0-2.250 3-2.500 3-5 0-2.210-1.790-4-4-4z"/></svg>
<div style="left:325px;top:341px;width:832px;height:1px;background:#dadce0;"></div>
<div style="left:325px;top:342px;width:832px;height:28px;background:#f1f3f4;"></div>
<div style="left:325px;top:370px;width:832px;height:1px;background:#dadce0;"></div>
<div style="left:325px;top:400px;width:832px;height:1px;background:#dadce0;"></div>
<div style="left:325px;top:431px;width:832px;height:1px;background:#dadce0;"></div>
<div style="left:325px;top:461px;width:832px;height:1px;background:#dadce0;"></div>
<div style="left:325px;top:491px;width:832px;height:1px;background:#dadce0;"></div>
<div style="left:554px;top:342px;width:1px;height:149px;background:#dadce0;"></div>
<div style="left:345px;top:349px;width:16px;height:16px;border:2px solid #202124;border-radius:2.5px"></div>
<div style="left:345px;top:377px;width:16px;height:16px;border:2px solid #202124;border-radius:2.5px"></div>
<div style="left:345px;top:407.5px;width:16px;height:16px;border:2px solid #202124;border-radius:2.5px"></div>
<div style="left:345px;top:438px;width:16px;height:16px;border:2px solid #202124;border-radius:2.5px"></div>
<div style="left:345px;top:468.5px;width:16px;height:16px;border:2px solid #202124;border-radius:2.5px"></div>
<span style="left:389.50px;top:347px;line-height:20px;font-size:13.4px;color:#202124;-webkit-text-stroke:0.2px #202124;letter-spacing:0.361px;">Field name</span>
<span style="left:571.20px;top:347px;line-height:20px;font-size:13.4px;color:#202124;-webkit-text-stroke:0.2px #202124;letter-spacing:0.590px;">Type</span>
<span style="left:659.00px;top:347px;line-height:20px;font-size:13.4px;color:#202124;-webkit-text-stroke:0.2px #202124;letter-spacing:0.933px;">Mode</span>
<span style="left:758.30px;top:347px;line-height:20px;font-size:13.4px;color:#202124;-webkit-text-stroke:0.2px #202124;letter-spacing:0.762px;">Description</span>
<span style="left:908.50px;top:347px;line-height:20px;font-size:13.4px;color:#202124;-webkit-text-stroke:0.2px #202124;letter-spacing:0.311px;">Key</span>
<span style="left:964.70px;top:347px;line-height:20px;font-size:13.4px;color:#202124;-webkit-text-stroke:0.2px #202124;letter-spacing:0.649px;">Collation</span>
<span style="left:1054.50px;top:347px;line-height:20px;font-size:13.4px;color:#202124;-webkit-text-stroke:0.2px #202124;letter-spacing:0.508px;">Default Value</span>
<span style="left:401.20px;top:376px;line-height:20px;font-size:13.4px;color:#3c4043;-webkit-text-stroke:0.2px #3c4043;letter-spacing:0.863px;">id</span>
<span style="left:571.00px;top:375px;line-height:21px;font-size:14px;color:#5f6368;letter-spacing:-1.018px;">STRING</span>
<span style="left:659.00px;top:375px;line-height:21px;font-size:14px;color:#5f6368;letter-spacing:-0.613px;">NULLABLE</span>
<span style="left:757.70px;top:375px;line-height:21px;font-size:14px;color:#5f6368;">-</span>
<span style="left:907.90px;top:375px;line-height:21px;font-size:14px;color:#5f6368;">-</span>
<span style="left:964.10px;top:375px;line-height:21px;font-size:14px;color:#5f6368;">-</span>
<span style="left:1053.90px;top:375px;line-height:21px;font-size:14px;color:#5f6368;">-</span>
<span style="left:401.20px;top:407px;line-height:20px;font-size:13.4px;color:#3c4043;-webkit-text-stroke:0.2px #3c4043;letter-spacing:0.820px;">schemaId</span>
<span style="left:571.00px;top:405px;line-height:21px;font-size:14px;color:#5f6368;letter-spacing:-1.018px;">STRING</span>
<span style="left:659.00px;top:405px;line-height:21px;font-size:14px;color:#5f6368;letter-spacing:-0.613px;">NULLABLE</span>
<span style="left:757.70px;top:405px;line-height:21px;font-size:14px;color:#5f6368;">-</span>
<span style="left:907.90px;top:405px;line-height:21px;font-size:14px;color:#5f6368;">-</span>
<span style="left:964.10px;top:405px;line-height:21px;font-size:14px;color:#5f6368;">-</span>
<span style="left:1053.90px;top:405px;line-height:21px;font-size:14px;color:#5f6368;">-</span>
<span style="left:401.20px;top:437px;line-height:20px;font-size:13.4px;color:#3c4043;-webkit-text-stroke:0.2px #3c4043;letter-spacing:1.009px;">parentDocumentId</span>
<span style="left:571.00px;top:436px;line-height:21px;font-size:14px;color:#5f6368;letter-spacing:-1.139px;">INTEGER</span>
<span style="left:659.00px;top:436px;line-height:21px;font-size:14px;color:#5f6368;letter-spacing:-0.613px;">NULLABLE</span>
<span style="left:757.70px;top:436px;line-height:21px;font-size:14px;color:#5f6368;">-</span>
<span style="left:907.90px;top:436px;line-height:21px;font-size:14px;color:#5f6368;">-</span>
<span style="left:964.10px;top:436px;line-height:21px;font-size:14px;color:#5f6368;">-</span>
<span style="left:1053.90px;top:436px;line-height:21px;font-size:14px;color:#5f6368;">-</span>
<span style="left:401.20px;top:467px;line-height:20px;font-size:13.4px;color:#3c4043;-webkit-text-stroke:0.2px #3c4043;letter-spacing:0.634px;">jsonData</span>
<span style="left:571.00px;top:466px;line-height:21px;font-size:14px;color:#5f6368;letter-spacing:-1.018px;">STRING</span>
<span style="left:659.00px;top:466px;line-height:21px;font-size:14px;color:#5f6368;letter-spacing:-0.613px;">NULLABLE</span>
<span style="left:757.70px;top:466px;line-height:21px;font-size:14px;color:#5f6368;">-</span>
<span style="left:907.90px;top:466px;line-height:21px;font-size:14px;color:#5f6368;">-</span>
<span style="left:964.10px;top:466px;line-height:21px;font-size:14px;color:#5f6368;">-</span>
<span style="left:1053.90px;top:466px;line-height:21px;font-size:14px;color:#5f6368;">-</span>
<div style="left:325px;top:492px;width:832px;height:15px;background:#fafafa;"></div>
<svg style="left:330px;top:495px;" width="5.4" height="9" viewBox="0 0 5.4 9"><path d="M5.4 0 L0 4.5 L5.4 9 Z" fill="#8b8b8b"/></svg>
<div style="left:343px;top:495px;width:528px;height:9px;background:#8b8b8b;border-radius:4.5px"></div>
<svg style="left:1146px;top:495px;" width="5.4" height="9" viewBox="0 0 5.4 9"><path d="M0 0 L5.4 4.5 L0 9 Z" fill="#8b8b8b"/></svg>
<div style="left:325px;top:560px;width:105px;height:32px;background:#0d64de;border-radius:4px"></div>
<span style="left:337.00px;top:567px;line-height:20px;font-size:13.4px;color:#fff;-webkit-text-stroke:0.2px #fff;letter-spacing:0.631px;">Edit schema</span>
</body></html>
